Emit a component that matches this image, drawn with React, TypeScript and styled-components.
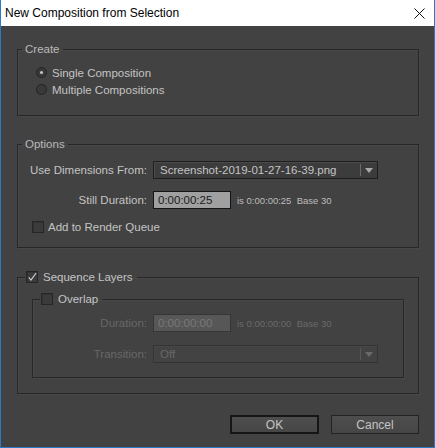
import React from "react";
import styled, { createGlobalStyle } from "styled-components";

const GlobalStyle = createGlobalStyle`
  html, body {
    margin: 0;
    padding: 0;
    background: #ffffff;
  }
  * {
    box-sizing: border-box;
  }
`;

const Check = () => (
  <svg width="13" height="13" viewBox="0 0 13 13">
    <path d="M2.3 6.3 L5.2 9.8 L11.8 0.6" fill="none" stroke="#cfcfcf" strokeWidth="1.5" />
  </svg>
);

const App = () => {
  return (
    <>
      <GlobalStyle />
      <Window>
        <TitleBar>
          <TitleText>New Composition from Selection</TitleText>
          <CloseButton>
            <svg width="11" height="11" viewBox="0 0 11 11">
              <path d="M0.5 0.5 L10.5 10.5 M10.5 0.5 L0.5 10.5" stroke="#111" strokeWidth="1" />
            </svg>
          </CloseButton>
        </TitleBar>
        <Body>
          <Group $top={16}>
            <Legend>Create</Legend>
            <GroupInner $pad="8px 0 17px 18px">
              <RadioRow>
                <Radio $on />
                <Label>Single Composition</Label>
              </RadioRow>
              <RadioRow>
                <Radio />
                <Label>Multiple Compositions</Label>
              </RadioRow>
            </GroupInner>
          </Group>

          <Group $top={21}>
            <Legend>Options</Legend>
            <GroupInner $pad="10px 0 13px 13px">
              <FieldGrid $labelWidth={116}>
                <FieldLabel>Use Dimensions From:</FieldLabel>
                <Dropdown $width={225}>
                  <DropText>Screenshot-2019-01-27-16-39.png</DropText>
                  <DropArrow />
                </Dropdown>
                <FieldLabel>Still Duration:</FieldLabel>
                <DurationRow>
                  <TimeInput>0:00:00:25</TimeInput>
                  <SmallNote>is 0:00:00:25&nbsp;&nbsp;Base 30</SmallNote>
                </DurationRow>
              </FieldGrid>
              <CheckRow $top={11}>
                <CheckBox />
                <Label>Add to Render Queue</Label>
              </CheckRow>
            </GroupInner>
          </Group>

          <Group $top={22}>
            <CheckLegend>
              <CheckBox $checked>
                <Check />
              </CheckBox>
              <Label>Sequence Layers</Label>
            </CheckLegend>
            <GroupInner $pad="8px 14px 15px 14px">
              <Group $top={0}>
                <CheckLegend>
                  <CheckBox />
                  <Label>Overlap</Label>
                </CheckLegend>
                <GroupInner $pad="8px 0 14px 0">
                  <FieldGrid $labelWidth={114} $rowGap={13}>
                    <FieldLabel $disabled>Duration:</FieldLabel>
                    <DurationRow>
                      <TimeInput $disabled>0:00:00:00</TimeInput>
                      <SmallNote $disabled>is 0:00:00:00&nbsp;&nbsp;Base 30</SmallNote>
                    </DurationRow>
                    <FieldLabel $disabled>Transition:</FieldLabel>
                    <Dropdown $width={225} $disabled>
                      <DropText>Off</DropText>
                      <DropArrow $disabled />
                    </Dropdown>
                  </FieldGrid>
                </GroupInner>
              </Group>
            </GroupInner>
          </Group>

          <ButtonBar>
            <Button $default>OK</Button>
            <Button>Cancel</Button>
          </ButtonBar>
        </Body>
      </Window>
    </>
  );
};

const Window = styled.div`
  width: 435px;
  height: 448px;
  display: flex;
  flex-direction: column;
  border: 1px solid #2b7bc4;
  border-top: none;
  background: #424242;
  font-family: "Liberation Sans", Arial, sans-serif;
`;
const TitleBar = styled.div`
  height: 26px;
  background: #ffffff;
  display: flex;
  align-items: center;
  justify-content: space-between;
  padding: 0 9px 0 4px;
  flex-shrink: 0;
`;
const TitleText = styled.div`
  font-size: 12px;
  color: #000000;
`;
const CloseButton = styled.div`
  display: flex;
  align-items: center;
  padding-top: 1px;
`;
const Body = styled.div`
  flex: 1;
  display: flex;
  flex-direction: column;
  padding: 0 15px 0 16px;
  color: #c4c4c4;
  font-size: 11.5px;
`;
const Group = styled.fieldset<{ $top: number }>`
  margin: ${(p) => p.$top}px 0 0 0;
  padding: 0;
  border: 1px solid #272727;
  box-shadow: 1px 1px 0 #484848, inset 1px 1px 0 #484848;
  min-width: 0;
`;
const GroupInner = styled.div<{ $pad: string }>`
  padding: ${(p) => p.$pad};
`;
const Legend = styled.legend`
  margin-left: 4px;
  padding: 0 3px;
  line-height: 14px;
  color: #b9b9b9;
`;
const CheckLegend = styled.legend`
  margin-left: 7px;
  padding: 0 4px 0 1px;
  height: 14px;
  line-height: 14px;
  display: flex;
  align-items: center;
  gap: 5px;
`;
const RadioRow = styled.div`
  height: 17px;
  display: flex;
  align-items: center;
  gap: 5px;
`;
const Radio = styled.span<{ $on?: boolean }>`
  width: 11px;
  height: 11px;
  border-radius: 50%;
  border: 1px solid #232323;
  background: #393939;
  display: flex;
  align-items: center;
  justify-content: center;
  &::after {
    content: "";
    width: 3px;
    height: 3px;
    border-radius: 50%;
    background: ${(p) => (p.$on ? "#c8c8c8" : "transparent")};
  }
`;
const Label = styled.span`
  white-space: nowrap;
`;
const FieldGrid = styled.div<{ $labelWidth: number; $rowGap?: number }>`
  display: grid;
  grid-template-columns: ${(p) => p.$labelWidth}px auto;
  column-gap: 6px;
  row-gap: ${(p) => p.$rowGap ?? 12}px;
  align-items: center;
  justify-items: start;
`;
const FieldLabel = styled.span<{ $disabled?: boolean }>`
  justify-self: end;
  white-space: nowrap;
  color: ${(p) => (p.$disabled ? "#676767" : "#c4c4c4")};
`;
const Dropdown = styled.div<{ $width: number; $disabled?: boolean }>`
  width: ${(p) => p.$width}px;
  height: 18px;
  display: flex;
  align-items: center;
  border: 1px solid ${(p) => (p.$disabled ? "#333333" : "#1e1e1e")};
  background: ${(p) => (p.$disabled ? "#434343" : "#3c3c3c")};
  color: ${(p) => (p.$disabled ? "#676767" : "#c4c4c4")};
  box-shadow: inset 1px 1px 0 ${(p) => (p.$disabled ? "#474747" : "#4a4a4a")};
`;
const DropText = styled.span`
  flex: 1;
  padding-left: 6px;
  white-space: nowrap;
`;
const DropArrow = styled.span<{ $disabled?: boolean }>`
  width: 17px;
  height: 12px;
  border-left: 1px solid ${(p) => (p.$disabled ? "#585858" : "#6a6a6a")};
  display: flex;
  align-items: center;
  justify-content: center;
  &::after {
    content: "";
    border-left: 4px solid transparent;
    border-right: 4px solid transparent;
    border-top: 5px solid ${(p) => (p.$disabled ? "#6a6a6a" : "#a8a8a8")};
  }
`;
const DurationRow = styled.div`
  display: flex;
  align-items: center;
  gap: 6px;
`;
const TimeInput = styled.div<{ $disabled?: boolean }>`
  width: 78px;
  height: 18px;
  line-height: 16px;
  padding-left: 4px;
  border: 1px solid ${(p) => (p.$disabled ? "#363636" : "#151515")};
  background: ${(p) => (p.$disabled ? "#575757" : "#a0a0a0")};
  color: ${(p) => (p.$disabled ? "#777777" : "#1a1a1a")};
`;
const SmallNote = styled.span<{ $disabled?: boolean }>`
  font-size: 9.5px;
  color: ${(p) => (p.$disabled ? "#6a6a6a" : "#bdbdbd")};
  white-space: nowrap;
`;
const CheckRow = styled.div<{ $top: number }>`
  margin-top: ${(p) => p.$top}px;
  margin-left: 1px;
  height: 14px;
  display: flex;
  align-items: center;
  gap: 4px;
`;
const CheckBox = styled.span<{ $checked?: boolean }>`
  width: 12px;
  height: 12px;
  border: 1px solid #262626;
  background: #3b3b3b;
  box-shadow: inset 1px 1px 0 #333;
  display: flex;
  align-items: center;
  justify-content: center;
  flex-shrink: 0;
  overflow: visible;
`;
const ButtonBar = styled.div`
  margin-top: 21px;
  display: flex;
  justify-content: flex-end;
  gap: 12px;
`;
const Button = styled.div<{ $default?: boolean }>`
  width: ${(p) => (p.$default ? 89 : 88)}px;
  height: 19px;
  display: flex;
  align-items: center;
  justify-content: center;
  font-size: 12px;
  color: #c4c4c4;
  background: linear-gradient(#4e4e4e, #464646);
  border: ${(p) => (p.$default ? "2px solid #161616" : "1px solid #232323")};
`;

export default App;
